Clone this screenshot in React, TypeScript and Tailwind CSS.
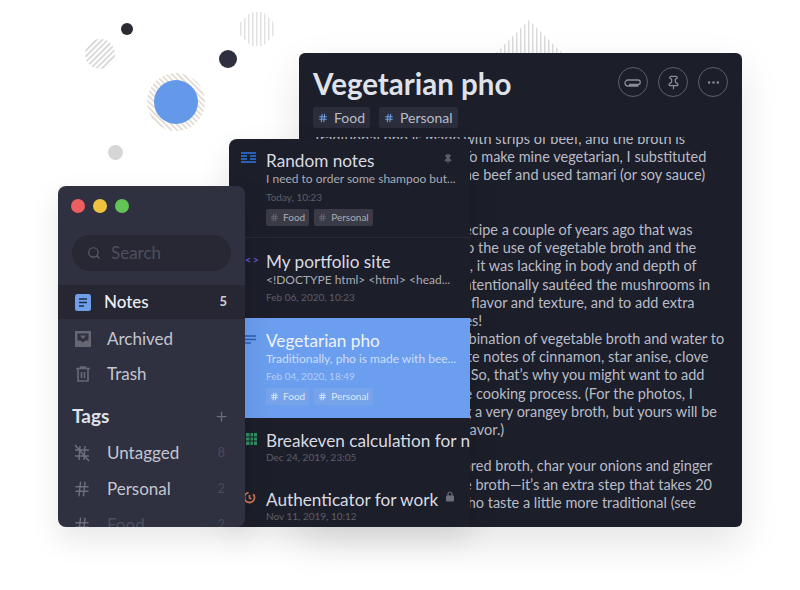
import { Search, Plus, Hash, Pin, MoreHorizontal } from "lucide-react";

function Hatch({ className, size, angle, color, shape }: { className: string; size: number; angle: number; color: string; shape: "circle" | "diamond" | "octagon" }) {
  const c = size / 2;
  const e = size * 0.18;
  const id = `hatch-${size}-${angle}`;
  return (
    <svg className={className} width={size} height={size} viewBox={`0 0 ${size} ${size}`}>
      <defs>
        <pattern id={id} width="4" height="4" patternUnits="userSpaceOnUse" patternTransform={`rotate(${angle})`}>
          <rect width="1.5" height="4" fill={color} />
        </pattern>
      </defs>
      {shape === "circle" && <circle cx={c} cy={c} r={c} fill={`url(#${id})`} />}
      {shape === "diamond" && <polygon points={`${c},0 ${size},${c} ${c},${size} 0,${c}`} fill={`url(#${id})`} />}
      {shape === "octagon" && (
        <polygon
          points={`${c - e},0 ${c + e},0 ${size},${c - e} ${size},${c + e} ${c + e},${size} ${c - e},${size} 0,${c + e} 0,${c - e}`}
          fill={`url(#${id})`}
        />
      )}
    </svg>
  );
}

function NotesIcon() {
  return (
    <svg width="16" height="17" viewBox="0 0 16 17">
      <rect width="16" height="17" rx="2.5" fill="#6f9fe8" />
      <path d="M4 5h8M4 8.500h8M4 12h5" stroke="#1f2b4a" strokeWidth="1.6" />
    </svg>
  );
}

function ArchiveIcon() {
  return (
    <svg width="16" height="16" viewBox="0 0 16 16">
      <path fillRule="evenodd" d="M0 0h16v16H0zM2.500 2.500v7h3l2.500 2 2.500-2h3v-7z" fill="#666773" />
      <path d="M5 4.500h6L8 8z" fill="#666773" />
    </svg>
  );
}

function TrashIcon() {
  return (
    <svg width="16" height="16" viewBox="0 0 16 16" fill="none" stroke="#666773" strokeWidth="1.7">
      <path d="M1 2.500h14M5.500 2.500V1h5v1.500M3 2.500V15h10V2.500M6.500 6v6M9.500 6v6" />
    </svg>
  );
}

function HashOffIcon() {
  return (
    <svg width="18" height="18" viewBox="0 0 18 18" fill="none" stroke="#6d6e7a" strokeWidth="1.5">
      <path d="M2 6h14M2 12h14M7 2 6 16M12 2l-1 14M2 1l14 16" />
    </svg>
  );
}

function ClipIcon() {
  return (
    <svg width="18" height="10" viewBox="0 0 18 10" fill="none" stroke="currentColor" strokeWidth="1.3">
      <path d="M5 7.500h9a2 2 0 0 0 0-4.500H4a3 3 0 0 0 0 6h10.500" />
    </svg>
  );
}

function LockIcon() {
  return (
    <svg width="8" height="11" viewBox="0 0 8 11">
      <path d="M2 5V3a2 2 0 0 1 4 0v2" fill="none" stroke="#6d6e7a" strokeWidth="1.2" />
      <rect y="4.500" width="8" height="6" rx="1" fill="#6d6e7a" />
    </svg>
  );
}

function RowIcon({ children, className }: { children: React.ReactNode; className: string }) {
  return <div className={`absolute ${className}`}>{children}</div>;
}

function ListTag({ label, active }: { label: string; active?: boolean }) {
  return (
    <span className={`flex h-[17px] items-center gap-[4px] rounded-[2px] px-[4px] text-[10px] ${active ? "bg-[#77a3ea] text-[#dbe7fb]" : "bg-[#3a3b47] text-[#a9abb4]"}`}>
      <Hash size={9} strokeWidth={2.5} className={active ? "text-[#dbe7fb]" : "text-[#666874]"} />
      {label}
    </span>
  );
}

const bodyLines = [
  "Traditional pho is made with strips of beef, and the broth is",
  "made from beef bones. To make mine vegetarian, I substituted",
  "button mushrooms for the beef and used tamari (or soy sauce)",
  "for fish sauce.",
  "",
  "We first published this recipe a couple of years ago that was",
  "pretty good, but owing to the use of vegetable broth and the",
  "mushroom, so as a result, it was lacking in body and depth of",
  "flavor. So, today I have intentionally sautéed the mushrooms in",
  "this new recipe for more flavor and texture, and to add extra",
  "more yums to the noodles!",
  "In my recipe, I use a combination of vegetable broth and water to",
  "help bring out the delicate notes of cinnamon, star anise, clove",
  "and dark cardamom too. So, that’s why you might want to add",
  "a cup of water during the cooking process. (For the photos, I",
  "we were aiming for using a very orangey broth, but yours will be",
  "lighter in colour, and in flavor.)",
  "",
  "If you want a deeply colored broth, char your onions and ginger",
  "before adding that to the broth—it’s an extra step that takes 20",
  "minutes but it makes a pho taste a little more traditional (see",
];

export default function App() {
  return (
    <div className="relative h-[590px] w-[800px] overflow-hidden bg-white font-['Lato','Noto_Sans',sans-serif]">
      {/* background shapes */}
      <div className="absolute left-[121px] top-[23px] h-3 w-3 rounded-full bg-[#2b2b33]" />
      <div className="absolute left-[219px] top-[50px] h-[18px] w-[18px] rounded-full bg-[#2e2f3f]" />
      <div className="absolute left-[108px] top-[145px] h-[15px] w-[15px] rounded-full bg-[#d6d6d6]" />
      <Hatch className="absolute left-[85px] top-[39px]" size={30} angle={45} color="#cfcfcf" shape="circle" />
      <Hatch className="absolute left-[240px] top-[12px]" size={34} angle={0} color="#e2e2e2" shape="octagon" />
      <Hatch className="absolute left-[147px] top-[73px]" size={58} angle={-45} color="#ddd3c8" shape="circle" />
      <div className="absolute left-[154px] top-[80px] h-11 w-11 rounded-full bg-[#6499ea]" />
      <Hatch className="absolute left-[496px] top-[20px]" size={66} angle={0} color="#dcdcdc" shape="diamond" />

      {/* note window */}
      <div className="absolute left-[299px] top-[53px] flex h-[474px] w-[443px] flex-col rounded-[6px] bg-[#1c1e29] shadow-[0_16px_40px_rgba(0,0,0,0.11)]">
        <div className="flex h-[84px] shrink-0 justify-between pl-[14px] pr-[14px] pt-[14px]">
          <div>
            <h1 className="text-[29.500px] font-bold leading-[34px] text-[#dfe2ea]">Vegetarian pho</h1>
            <div className="mt-[6px] flex gap-[9px]">
              {["Food", "Personal"].map((t) => (
                <span key={t} className="flex h-[21px] items-center gap-[6px] rounded-[2px] bg-[#2b2d3a] px-[5px] text-[14px] text-[#b9bcc8]">
                  <Hash size={10} strokeWidth={2.5} className="text-[#6f9fe8]" />
                  {t}
                </span>
              ))}
            </div>
          </div>
          <div className="flex gap-[10px]">
            <button className="flex h-[30px] w-[30px] items-center justify-center rounded-full border border-[#5d5f6a] text-[#8b8d98]">
              <ClipIcon />
            </button>
            <button className="flex h-[30px] w-[30px] items-center justify-center rounded-full border border-[#5d5f6a] text-[#8b8d98]">
              <Pin size={15} />
            </button>
            <button className="flex h-[30px] w-[30px] items-center justify-center rounded-full border border-[#5d5f6a] text-[#8b8d98]">
              <MoreHorizontal size={15} />
            </button>
          </div>
        </div>
        <div className="min-h-0 flex-1 overflow-hidden pl-[14px] text-[14.500px] leading-[18.200px] text-[#b9bcc8]">
          <div className="-mt-[7px]">
            {bodyLines.map((line, i) => (
              <div key={i} className="h-[18.200px] whitespace-nowrap">{line}</div>
            ))}
          </div>
        </div>
      </div>

      {/* list window */}
      <div className="absolute left-[229px] top-[139px] h-[388px] w-[241px] overflow-hidden rounded-tl-[8px] bg-[#1c1e29] text-[#d9dbe2] shadow-[0_12px_30px_rgba(0,0,0,0.1)]">
        <div className="relative h-[99px] border-b border-[#272935] pl-[37px] pt-[12px]">
          <RowIcon className="left-[12px] top-[13px]">
            <svg width="15" height="11" viewBox="0 0 15 11"><path d="M0 1h15M0 4h6M9 4h6M0 7h6M9 7h6M0 10h15" stroke="#2a5fb8" strokeWidth="2" /></svg>
          </RowIcon>
          <Pin size={10} className="absolute right-[17px] top-[15px] fill-[#5d5f6a] text-[#5d5f6a]" />
          <div className="text-[17.200px] leading-[20px]">Random notes</div>
          <div className="whitespace-nowrap text-[12px] leading-[15px] text-[#a9abb4]">I need to order some shampoo but...</div>
          <div className="mt-[4px] text-[10px] leading-[14px] text-[#5d5f6a]">Today, 10:23</div>
          <div className="mt-[5px] flex gap-[5px]">
            <ListTag label="Food" />
            <ListTag label="Personal" />
          </div>
        </div>
        <div className="relative h-[80px] pl-[37px] pt-[14px]">
          <RowIcon className="left-[16px] top-[16px] text-[11px] font-bold leading-none tracking-[1px] text-[#5a4fc0]">&lt;&gt;</RowIcon>
          <div className="text-[17.200px] leading-[20px]">My portfolio site</div>
          <div className="whitespace-nowrap text-[12px] leading-[15px] text-[#a9abb4]">&lt;!DOCTYPE html&gt; &lt;html&gt; &lt;head...</div>
          <div className="mt-[3px] text-[10px] leading-[14px] text-[#5d5f6a]">Feb 06, 2020, 10:23</div>
        </div>
        <div className="relative h-[100px] pl-[37px] pt-[13px]">
          <div className="absolute inset-y-0 left-[16px] right-0 bg-[#6b9eee]" />
          <RowIcon className="left-[13px] top-[17px]">
            <svg width="14" height="9" viewBox="0 0 14 9"><path d="M0 1h14M0 4.500h14M0 8h9" stroke="#2a5fb8" strokeWidth="1.500" /></svg>
          </RowIcon>
          <div className="relative">
            <div className="text-[17.200px] leading-[20px] text-[#eef3fd]">Vegetarian pho</div>
            <div className="whitespace-nowrap text-[12px] leading-[15px] text-[#cddffa]">Traditionally, pho is made with bee...</div>
            <div className="mt-[3px] text-[10px] leading-[14px] text-[#b3cef6]">Feb 04, 2020, 18:49</div>
            <div className="mt-[5px] flex gap-[5px]">
              <ListTag label="Food" active />
              <ListTag label="Personal" active />
            </div>
          </div>
        </div>
        <div className="relative h-[60px] pl-[37px] pt-[13px]">
          <RowIcon className="left-[17px] top-[15px]">
            <svg width="11" height="12" viewBox="0 0 11 12"><path d="M0 0h11v12H0z" fill="#2f8f5f" /><path d="M0 4h11M0 8h11M4 0v12M7.500 0v12" stroke="#1c1e29" /></svg>
          </RowIcon>
          <div className="whitespace-nowrap text-[17.200px] leading-[20px]">Breakeven calculation for note</div>
          <div className="text-[10px] leading-[12px] text-[#5d5f6a]">Dec 24, 2019, 23:05</div>
        </div>
        <div className="relative h-[49px] pl-[37px] pt-[12px]">
          <RowIcon className="left-[14px] top-[13px]">
            <svg width="13" height="13" viewBox="0 0 13 13" fill="none" stroke="#c9734f" strokeWidth="1.800"><circle cx="6.500" cy="6.500" r="5" strokeDasharray="22 5" /><path d="M6.500 4v3l2 1" /></svg>
          </RowIcon>
          <RowIcon className="left-[217px] top-[13px]"><LockIcon /></RowIcon>
          <div className="whitespace-nowrap text-[17.200px] leading-[20px]">Authenticator for work</div>
          <div className="text-[10px] leading-[12px] text-[#5d5f6a]">Nov 11, 2019, 10:12</div>
        </div>
      </div>

      {/* sidebar window */}
      <div className="absolute left-[58px] top-[186px] h-[341px] w-[187px] overflow-hidden rounded-[8px] bg-[#2f3040] shadow-[0_12px_30px_rgba(0,0,0,0.1)]">
        <div className="flex gap-[8px] pl-[13px] pt-[13px]">
          <span className="h-[14px] w-[14px] rounded-full bg-[#ee5e5e]" />
          <span className="h-[14px] w-[14px] rounded-full bg-[#eec23f]" />
          <span className="h-[14px] w-[14px] rounded-full bg-[#62c454]" />
        </div>
        <div className="mx-[14px] mt-[22px] flex h-[36px] items-center gap-[10px] rounded-full bg-[#272833] pl-[15px] text-[17px] text-[#4d4f5e]">
          <Search size={14} className="text-[#5d5f6c]" />
          Search
        </div>
        <div className="mt-[14px] flex h-[34px] items-center justify-between bg-[#262733] pl-[17px] pr-[18px]">
          <div className="flex items-center gap-[13px] text-[17px] font-medium text-[#eceef4]">
            <NotesIcon />
            Notes
          </div>
          <span className="text-[13px] font-bold text-[#d0d2da]">5</span>
        </div>
        <div className="mt-[2px] flex h-[35px] items-center gap-[16px] pl-[17px] text-[17px] text-[#c4c6d0]">
          <ArchiveIcon />
          Archived
        </div>
        <div className="flex h-[35px] items-center gap-[16px] pl-[17px] text-[17px] text-[#c4c6d0]">
          <TrashIcon />
          Trash
        </div>
        <div className="mt-[8px] flex h-[35px] items-center justify-between pl-[14px] pr-[16px]">
          <span className="text-[19px] font-bold text-[#dfe1e8]">Tags</span>
          <Plus size={15} className="text-[#6d6e7a]" />
        </div>
        <div className="mt-[1px] flex h-[36px] items-center justify-between pl-[15px] pr-[20px] text-[17px] text-[#c4c6d0]">
          <div className="flex items-center gap-[16px]"><HashOffIcon />Untagged</div>
          <span className="text-[13px] text-[#494b59]">8</span>
        </div>
        <div className="flex h-[36px] items-center justify-between pl-[15px] pr-[20px] text-[17px] text-[#c4c6d0]">
          <div className="flex items-center gap-[16px]"><Hash size={18} className="text-[#6d6e7a]" />Personal</div>
          <span className="text-[13px] text-[#494b59]">2</span>
        </div>
        <div className="flex h-[36px] items-center justify-between pl-[15px] pr-[20px] text-[17px] text-[#4d4f5e]">
          <div className="flex items-center gap-[16px]"><Hash size={18} className="text-[#6d6e7a]" />Food</div>
          <span className="text-[13px] text-[#494b59]">2</span>
        </div>
      </div>
    </div>
  );
}
